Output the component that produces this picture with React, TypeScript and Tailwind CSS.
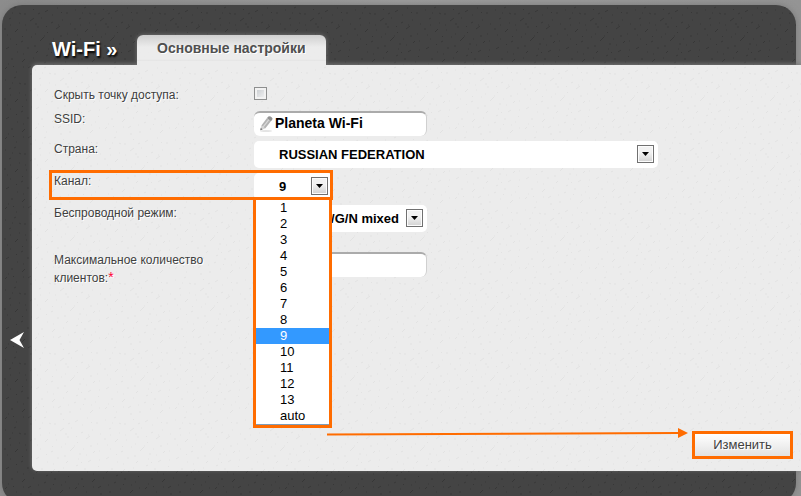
import React, { useState } from 'react';
import clsx from 'clsx';

const CHANNELS = ['1', '2', '3', '4', '5', '6', '7', '8', '9', '10', '11', '12', '13', 'auto'];

const CONTROL = 'col-start-2 relative flex';
const LABEL = 'text-[12px] leading-4';
const TEXT_BOX =
  'h-[25px] w-[173px] rounded-md border-t-2 border-r border-[#ababab] border-r-[#d0d0d0] bg-white pb-1 text-[14px] font-bold text-black outline-none';

interface GrainProps {
  id: string;
  color: string;
  className?: string;
}

// speckled paper texture that lies under the content
const Grain: React.FC<GrainProps> = ({ id, color, className }) => (
  <svg aria-hidden="true" className={clsx('pointer-events-none absolute inset-0 h-full w-full', className)}>
    <defs>
      <pattern id={id} width="70" height="70" patternUnits="userSpaceOnUse">
        <path
          d="M3 5h1M12 3l2-1M22 9h2M31 4l1 1M43 7l3-2M55 3h1M64 8h2M7 14l2-1M17 18h1M28 16l4-3M39 13h1M49 18l2-1M60 15h1M68 19h1M2 24h2M13 27l3-3M24 25h1M35 22h2M45 28l1-1M54 24l4-3M65 29h1M8 34h1M19 37l2-1M29 32h1M38 36l4-4M51 34h1M61 38l2-2M4 44l3-2M15 47h1M25 43h2M34 48l2-2M46 44h1M56 47l3-2M67 45h1M9 54h2M20 57l3-3M31 53h1M42 58l2-1M52 54h2M63 57h1M3 64l2-2M14 67h1M26 63l3-2M37 67h2M48 64h1M58 68l3-3M67 63h1M10 8h1M33 29h1M47 39h2M21 49h1M59 60h1M6 59h1M17 8l2 1M36 9l2-1M50 10h1M59 7l1 1M23 20h1M33 19h2M44 22l1-1M56 20h1M8 20h1M20 31l1 1M42 31h1M58 31h2M14 40l1-1M32 41h2M54 40h1M67 36h1M21 62h1M44 51l2-1M11 61l1 1M36 60h1M51 59l1 1M66 52l1-1M28 69h2M5 30h1M49 47l1 1"
          stroke={color}
          strokeWidth="1"
          fill="none"
        />
      </pattern>
    </defs>
    <rect width="100%" height="100%" fill={`url(#${id})`} />
  </svg>
);

const PencilIcon = () => (
  <svg aria-hidden="true" viewBox="0 0 16 18" className="pointer-events-none absolute top-1 left-1 h-[18px] w-4">
    <ellipse cx="8" cy="16" rx="6" ry="1" fill="#e4e4e4" />
    <path d="M2.2 15.2 3.4 10.4 7.2 13.6z" fill="#d4d4d4" />
    <path d="M2.2 15.2 2.8 12.8 4.6 14.4z" fill="#777" />
    <path d="M3.4 10.4 9 3 12.9 6.2 7.2 13.6z" fill="#b4b4b4" />
    <path d="M5.2 11.8 10.9 4.6" stroke="#dadada" strokeWidth="1.2" />
    <path d="M9 3 10.4 1.4Q12 .8 13.6 2.2T14.2 4.8L12.9 6.2z" fill="#929292" />
  </svg>
);

interface DropDownProps {
  id: string;
  options: string[];
  value: string;
  className: string;
  onChange: (value: string) => void;
}

const DropDown: React.FC<DropDownProps> = ({ id, options, value, className, onChange }) => (
  <div className={clsx('relative h-[27px]', className)}>
    <select
      id={id}
      value={value}
      onChange={(e) => onChange(e.target.value)}
      className="h-full w-full appearance-none rounded-[5px] bg-white pr-5 pl-[25px] text-[13px] font-bold text-black outline-none"
    >
      {options.map((option) => (
        <option key={option}>{option}</option>
      ))}
    </select>
    <span className="pointer-events-none absolute top-1 right-1 flex h-[18px] w-[17px] items-center justify-center border border-[#707070] bg-linear-to-b from-[#f2f2f2] from-40% to-[#d2d2d2] shadow-[inset_0_0_0_1px_#fcfcfc]">
      <svg viewBox="0 0 7 4" className="h-1 w-[7px]">
        <path d="M0 0h7L3.5 4z" fill="#000" />
      </svg>
    </span>
  </div>
);

const App: React.FC = () => {
  const [hidden, setHidden] = useState(false);
  const [ssid, setSsid] = useState('Planeta Wi-Fi');
  const [country, setCountry] = useState('RUSSIAN FEDERATION');
  const [channel, setChannel] = useState('9');
  const [mode, setMode] = useState('802.11 B/G/N mixed');
  const [clients, setClients] = useState('');

  return (
    <div className="h-screen overflow-hidden bg-[#959595] bg-linear-to-r from-[#8c8c8c] via-[#9d9d9d] to-[#949494] pt-[5px] pr-[5px] pl-0.5 font-['Liberation_Sans',Arial,sans-serif] text-[#404040]">
      <div className="relative rounded-[20px] bg-[#444444] pb-8 shadow-[0_0_6px_#777]">
        <Grain id="grain-dark" color="#373737" className="rounded-[20px]" />

        <header className="relative flex h-[60px] items-end pl-[50px]">
          <h1 className="w-[85px] pb-1 text-[20px] leading-6 font-bold text-white [text-shadow:1px_2px_2px_#000]">
            Wi-Fi »
          </h1>
          <nav>
            <a
              href="#basic"
              className="flex h-[30px] items-center rounded-t-md bg-linear-to-b from-[#cfcfcf] to-[#ececec] to-40% px-5 pb-1 text-[14px] font-bold whitespace-nowrap text-[#4f4f4f] shadow-[0_0_4px_#777] [text-shadow:1px_1px_0_#fff]"
            >
              Основные настройки
            </a>
          </nav>
        </header>

        <div className="relative -mr-[5px] flex">
          <div className="flex w-[30px] shrink-0 items-center justify-center pt-36">
            <button type="button" aria-label="Назад">
              <svg viewBox="0 0 14 16" className="h-4 w-3.5">
                <path d="M0 8 14 0 9.5 8 14 16z" fill="#fff" />
              </svg>
            </button>
          </div>

          <main className="relative min-w-0 flex-1 rounded-l-[5px] bg-[#ececec] pt-[22px] pb-3 shadow-[0_-1px_4px_#777]">
            <Grain id="grain-light" color="#e2e2e2" />
            {/* hides the panel glow under the tab */}
            <div className="absolute -top-1 left-[105px] h-1 w-[189px] bg-[#ececec]" />

            <form className="relative" onSubmit={(e) => e.preventDefault()}>
              <div className="grid grid-cols-[200px_1fr] items-start gap-y-[5px] pl-[22px] [text-shadow:1px_1px_0_#fff]">
                <div className="col-span-2 grid h-[19px] grid-cols-subgrid items-start">
                  <label htmlFor="hide" className={LABEL}>Скрыть точку доступа:</label>
                  <div className={CONTROL}>
                    <input
                      id="hide"
                      type="checkbox"
                      checked={hidden}
                      onChange={(e) => setHidden(e.target.checked)}
                      className="size-[13px] appearance-none border border-[#8e8f8f] bg-linear-to-br from-[#c4c8cc] to-[#f6f6f6] shadow-[inset_0_0_0_2px_#f2f2f2] checked:from-[#555]"
                    />
                  </div>
                </div>

                <label htmlFor="ssid" className={LABEL}>SSID:</label>
                <div className={CONTROL}>
                  <input
                    id="ssid"
                    type="text"
                    value={ssid}
                    onChange={(e) => setSsid(e.target.value)}
                    className={clsx(TEXT_BOX, 'pl-[21px]')}
                  />
                  <PencilIcon />
                </div>

                <label htmlFor="country" className={LABEL}>Страна:</label>
                <div className={CONTROL}>
                  <DropDown
                    id="country"
                    options={['RUSSIAN FEDERATION']}
                    value={country}
                    onChange={setCountry}
                    className="w-[404px]"
                  />
                </div>

                <div className="relative z-10 col-span-2 grid grid-cols-subgrid items-start">
                  <label htmlFor="channel" className={LABEL}>Канал:</label>
                  <div className={CONTROL}>
                    <DropDown
                      id="channel"
                      options={CHANNELS}
                      value={channel}
                      onChange={setChannel}
                      className="w-[78px]"
                    />
                    <ul
                      role="listbox"
                      aria-label="Канал"
                      className="absolute top-6 -left-px w-[79px] border-3 border-[#ff6c00] bg-white text-[13px] leading-4 text-black shadow-[inset_0_-1px_0_#7f9db9] [text-shadow:none]"
                    >
                      {CHANNELS.map((item) => (
                        <li
                          key={item}
                          role="option"
                          aria-selected={item === channel}
                          onClick={() => setChannel(item)}
                          className={clsx('pl-6', item === channel && 'bg-[#3399ff] text-white')}
                        >
                          {item}
                        </li>
                      ))}
                      <li aria-hidden="true" className="h-px" />
                    </ul>
                  </div>
                  <div className="pointer-events-none absolute -top-[3px] -left-[5px] h-[30px] w-[284px] border-3 border-[#ff6c00]" />
                </div>

                <label htmlFor="mode" className={LABEL}>Беспроводной режим:</label>
                <div className={CONTROL}>
                  <DropDown
                    id="mode"
                    options={['802.11 B/G/N mixed']}
                    value={mode}
                    onChange={setMode}
                    className="w-[173px]"
                  />
                </div>

                <label htmlFor="clients" className="mt-3.5 text-[12px] leading-[18px]">
                  <span className="block">Максимальное количество</span>
                  <span className="flex">
                    <span>клиентов:</span>
                    <span className="text-[14px] leading-4 text-[#ff0033]">*</span>
                  </span>
                </label>
                <div className={clsx(CONTROL, 'mt-[15px]')}>
                  <input
                    id="clients"
                    type="text"
                    value={clients}
                    onChange={(e) => setClients(e.target.value)}
                    className={clsx(TEXT_BOX, 'pl-[90px]')}
                  />
                </div>
              </div>

              <div className="mt-36 flex pr-2 pl-[295px]">
                <svg aria-hidden="true" className="mr-3.5 h-3 flex-1 overflow-visible">
                  <line x1="0" y1="3.5" x2="100%" y2="2" stroke="#ff6c00" strokeWidth="2" />
                  <svg x="100%" overflow="visible">
                    <path d="M0-3 10 2 0 7z" fill="#ff6c00" />
                  </svg>
                </svg>
                <button
                  type="submit"
                  className="h-7 w-[101px] border-3 border-[#ff6c00] bg-linear-to-b from-white to-[#e2e2e2] text-[13px] leading-5 [text-shadow:1px_1px_0_#fff]"
                >
                  Изменить
                </button>
              </div>
            </form>
          </main>
        </div>
      </div>
    </div>
  );
};

export default App;
